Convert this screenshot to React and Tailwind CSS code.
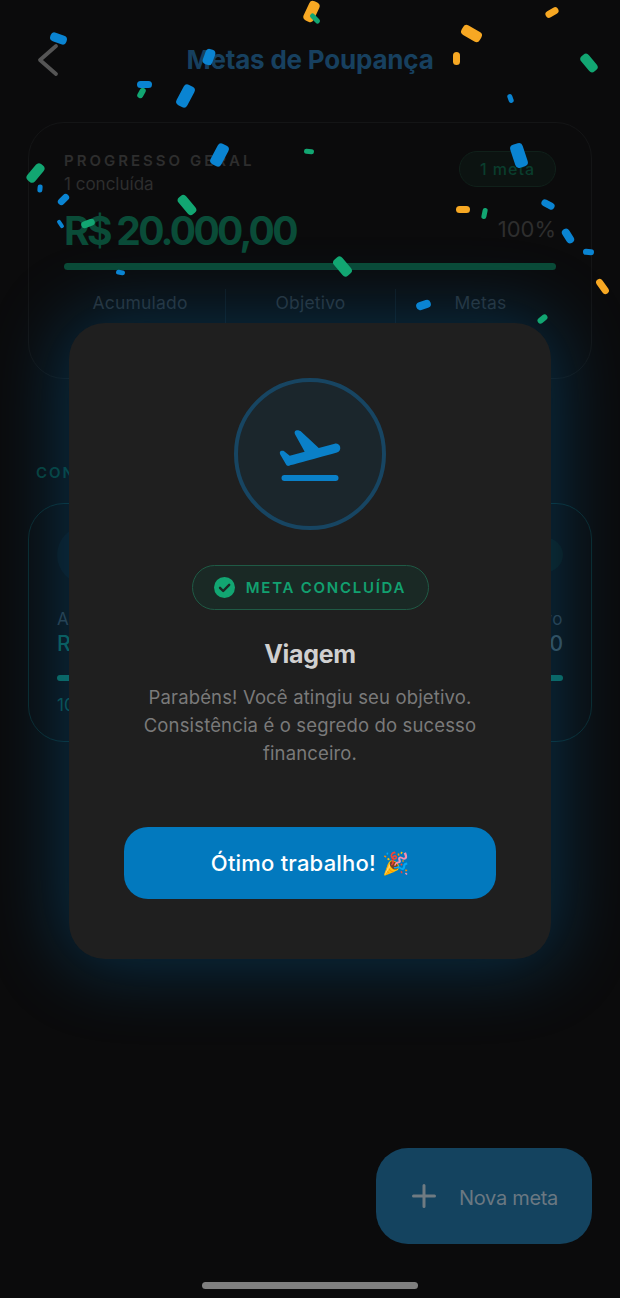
import React from "react";

const B = "#0a84d2", G = "#12a672", O = "#f7a823";
const confetti = [
  [311, 11, 21, 11, -65, O], [315, 18, 12, 5, 45, G], [471, 33, 21, 11, 30, O], [552, 12, 14, 7, -30, O],
  [456, 58, 13, 7, 90, O], [589, 63, 20, 10, 50, G], [510, 98, 9, 5, 70, B], [58, 38, 17, 9, 20, B],
  [209, 57, 16, 10, -70, B], [141, 93, 11, 6, -60, G], [144, 84, 15, 7, 0, B], [185, 96, 23, 12, -62, B],
  [219, 155, 23, 12, -62, B], [309, 151, 10, 5, 5, G], [519, 155, 24, 13, 72, B], [35, 173, 21, 10, -50, G],
  [40, 188, 8, 5, -85, B], [63, 199, 13, 7, -45, B], [60, 224, 9, 4, 55, B], [88, 223, 14, 7, -20, G],
  [187, 205, 22, 10, 50, G], [120, 272, 9, 5, 10, B], [463, 209, 14, 7, 0, O], [484, 213, 11, 5, -78, G],
  [548, 204, 14, 7, 28, B], [568, 236, 16, 8, 58, B], [588, 252, 11, 6, 3, B], [602, 286, 17, 7, 55, O],
  [342, 266, 21, 11, 50, G], [423, 305, 15, 8, -18, B], [542, 319, 11, 6, -38, G],
];

function Stat({ label, border }) {
  return (
    <div className={`h-[52px] pt-[1px] text-center text-[17.5px] tracking-[0.2px] text-[#2a3036] ${border ? "border-l border-[#10171c]" : ""}`}>
      {label}
    </div>
  );
}

export default function App() {
  return (
    <div className="relative h-[1298px] w-[620px] overflow-hidden bg-[#0b0b0c] font-['Inter','Noto_Sans',sans-serif]">
      {/* Dimmed page */}
      <header className="relative flex h-[122px] items-start justify-center pt-[42px]">
        <svg className="absolute left-[36px] top-[43px]" width="24" height="34" viewBox="0 0 24 34" fill="none" stroke="#555" strokeWidth="3.8" strokeLinecap="round" strokeLinejoin="round">
          <path d="M20 3 L4 17 L20 31" />
        </svg>
        <h1 className="text-[26px] leading-[36px] font-bold tracking-[-0.2px] text-[#17405f]">Metas de Poupança</h1>
      </header>

      <main className="px-[28px]">
        <section className="h-[257px] rounded-[36px] border border-[#141516] px-[35px] pt-[27px]">
          <div className="flex items-start justify-between">
            <div>
              <div className="text-[15px] leading-[22px] font-semibold tracking-[3px] text-[#2e2e2e]">PROGRESSO GERAL</div>
              <div className="text-[17px] leading-[24px] text-[#2e2e2e]">1 concluída</div>
            </div>
            <div className="mt-[1px] flex h-[36px] w-[97px] items-center justify-center rounded-full border border-[#10201a] bg-[#0c1311] text-[16px] font-medium tracking-[1px] text-[#0a3d2d]">
              1 meta
            </div>
          </div>
          <div className="mt-[10px] flex items-center justify-between">
            <div className="text-[39px] leading-[50px] font-bold tracking-[-2.7px] [word-spacing:0px] text-[#0a4c38]">R$ 20.000,00</div>
            <div className="-mt-[4px] text-[22px] leading-[30px] text-[#2e2e2e]">100%</div>
          </div>
          <div className="mt-[7px] h-[7px] rounded-full bg-[#0a4a36]" />
          <div className="-mx-[9px] mt-[19px] grid grid-cols-3">
            <Stat label="Acumulado" />
            <Stat label="Objetivo" border />
            <Stat label="Metas" border />
          </div>
        </section>

        <div className="mt-[84px] ml-[8px] text-[15px] leading-[20px] font-semibold tracking-[2px] text-[#083f36]">CONCLUÍDAS</div>

        <section className="mt-[20px] h-[239px] rounded-[36px] border border-[#0b2a2c] px-[28px] pt-[22px]">
          <div className="flex items-center justify-between">
            <div className="h-[58px] w-[58px] rounded-full bg-[#0b1216]" />
            <div className="h-[34px] w-[90px] rounded-full bg-[#0b1513]" />
          </div>
          <div className="mt-[24px] flex justify-between text-[17px] leading-[22px] tracking-[0.5px] text-[#2f3a42]">
            <span>Acumulado</span>
            <span>Objetivo</span>
          </div>
          <div className="flex justify-between text-[21px] leading-[28px] font-medium">
            <span className="text-[#0d5a50]">R$ 20.000,00</span>
            <span className="text-[#3a4a52]">R$ 20.000,00</span>
          </div>
          <div className="mt-[17px] h-[6px] rounded-full bg-[#0d6658]" />
          <div className="mt-[13px] text-[17px] leading-[22px] text-[#0b4d47]">100%</div>
        </section>
      </main>

      <button className="absolute left-[376px] top-[1148px] flex h-[96px] w-[216px] items-center gap-[23px] rounded-[32px] bg-[#14435f] pl-[36px] text-[20px] text-[#6a7882]">
        <svg width="24" height="24" viewBox="0 0 24 24" stroke="#6f7b82" strokeWidth="3" strokeLinecap="round">
          <path d="M12 1.5v21M1.5 12h21" />
        </svg>
        <span className="pt-[3px] tracking-[-0.3px]">Nova meta</span>
      </button>

      {/* Dialog */}
      <div className="absolute inset-0 flex items-start justify-center pt-[323px]">
        <div className="flex h-[636px] w-[482px] flex-col items-center rounded-[36px] bg-[#1f1f1f] pt-[55px] shadow-[0_0_75px_8px_rgba(2,119,189,0.33)]">
          <div className="flex h-[152px] w-[152px] items-center justify-center rounded-full border-[4px] border-[#174562] bg-[#1b262c]">
            <svg width="72" height="72" viewBox="0 0 24 24" fill="#0a80c8">
              <rect x="2.5" y="19" width="19" height="2" rx="1" />
              <path d="M22.07 9.64c-.21-.8-1.04-1.28-1.84-1.06L14.92 10 9.1 4.58c-.4-.37-1.3-.6-1.75-.4-.5.2-.6.7-.35 1.2l3.22 5.87-4.97 1.33-1.97-1.54c-.3-.2-1.2-.1-1.3.3-.1.3 0 .6.1.8l1.9 3.3c.2.4.6.6 1 .5 0 0 6.9-1.9 16-4.4.81-.23 1.28-1.05 1.07-1.85z" />
            </svg>
          </div>

          <div className="mt-[35px] flex h-[45px] w-[237px] items-center justify-center gap-[11px] rounded-full border border-[#1f5a45] bg-[#1a2925]">
            <svg width="21" height="21" viewBox="0 0 21 21">
              <circle cx="10.5" cy="10.5" r="10.5" fill="#12a672" />
              <path d="M6 10.8l3.2 3.2 6-6.2" fill="none" stroke="#1a2925" strokeWidth="2.4" strokeLinecap="round" strokeLinejoin="round" />
            </svg>
            <span className="pt-[1px] text-[15px] font-semibold tracking-[1.75px] text-[#12a070]">META CONCLUÍDA</span>
          </div>

          <h2 className="mt-[26px] text-[25px] leading-[36px] font-bold tracking-[-0.3px] text-[#d0d0d0]">Viagem</h2>
          <p className="mt-[11px] w-[400px] text-center text-[18.5px] leading-[28px] tracking-[0.15px] text-[#7a7a7a]">
            Parabéns! Você atingiu seu objetivo. Consistência é o segredo do sucesso financeiro.
          </p>

          <button className="mt-[60px] flex h-[72px] w-[372px] items-center justify-center rounded-[24px] bg-[#0279be] text-[22px] font-medium tracking-[0.2px] text-white">
            Ótimo trabalho! 🎉
          </button>
        </div>
      </div>

      {/* Confetti */}
      {confetti.map(([x, y, w, h, a, c], i) => (
        <span
          key={i}
          className="absolute rounded-[4px]"
          style={{ left: x - w / 2, top: y - h / 2, width: w, height: h, background: c, transform: `rotate(${a}deg)` }}
        />
      ))}

      {/* Home indicator */}
      <div className="absolute bottom-[9px] left-[202px] h-[7px] w-[216px] rounded-full bg-[#7f7f7f]" />
    </div>
  );
}
